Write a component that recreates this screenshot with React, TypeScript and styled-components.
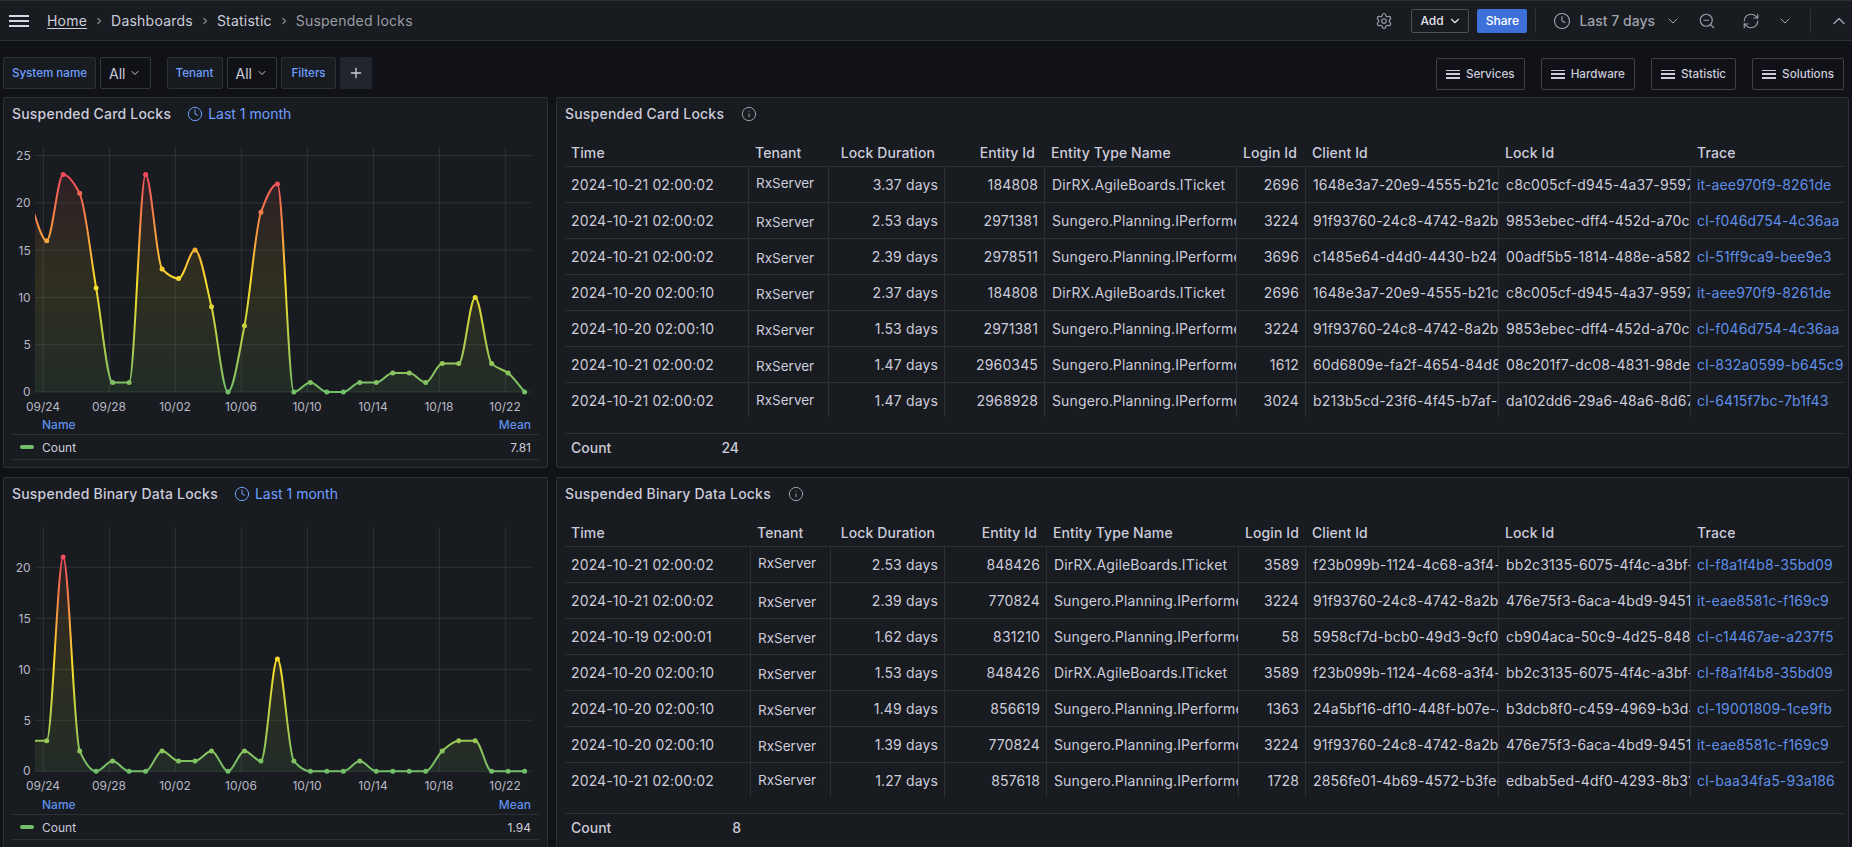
import React from 'react';
import styled, { createGlobalStyle } from 'styled-components';
import {
  ChevronDown,
  ChevronUp,
  Clock,
  Info,
  Plus,
  RefreshCw,
  Settings,
  ZoomOut,
} from 'lucide-react';

const GlobalStyle = createGlobalStyle`
  html, body {
    margin: 0;
    height: 847px;
    overflow: hidden;
    background: #111217;
    color: #ccccdc;
    font-family: Inter, "Noto Sans", "Liberation Sans", sans-serif;
    font-size: 14px;
  }
  * { box-sizing: border-box; }
`;

const TopBar = styled.header`
  display: flex;
  align-items: center;
  height: 41px;
  padding: 0 3px 0 9px;
  background: #181b1f;
  border-top: 1px solid #2a2d33;
  border-bottom: 1px solid #2c2f35;
`;

const Burger = styled.div`
  display: flex;
  flex-direction: column;
  justify-content: space-between;
  width: 20px;
  height: 12px;
  margin-right: 18px;

  span {
    display: block;
    height: 2px;
    background: #d8d8e4;
  }
`;

const Crumb = styled.span<{ $current?: boolean; $home?: boolean }>`
  color: ${(p) => (p.$current ? '#9a9ba6' : '#ccccdc')};
  text-decoration: ${(p) => (p.$home ? 'underline' : 'none')};
  text-underline-offset: 2px;
  letter-spacing: 0.22px;
  white-space: nowrap;
`;

const CrumbSep = styled.span`
  display: flex;
  justify-content: center;
  width: 24px;
  color: #85868f;
`;

const ToolGroup = styled.div`
  display: flex;
  align-items: center;
  margin-left: auto;
  color: #9fa0ad;
`;

const Slot = styled.span<{ $ml?: number }>`
  display: flex;
  align-items: center;
  margin-left: ${(p) => p.$ml ?? 0}px;
`;

const AddButton = styled.div`
  display: flex;
  align-items: center;
  gap: 4px;
  height: 24px;
  width: 58px;
  margin-left: 18px;
  padding-left: 8px;
  border: 1px solid rgba(204, 204, 220, 0.3);
  border-radius: 2px;
  color: #e4e4ee;
  font-size: 12px;
  font-weight: 500;
`;

const ShareButton = styled.div`
  display: flex;
  align-items: center;
  justify-content: center;
  height: 24px;
  width: 50px;
  margin-left: 8px;
  background: #3d71d9;
  border-radius: 2px;
  color: #fff;
  font-size: 12px;
  font-weight: 500;
`;

const Divider = styled.span<{ $ml: number }>`
  width: 1px;
  height: 24px;
  margin-left: ${(p) => p.$ml}px;
  background: #2f3238;
`;

const RangeText = styled.span`
  margin-left: 8px;
  color: #9fa0ad;
  font-weight: 500;
  white-space: nowrap;
`;

const FilterRow = styled.div`
  display: flex;
  align-items: flex-start;
  justify-content: space-between;
  height: 40px;
  margin-top: 16px;
  padding: 0 8px 0 3px;
`;

const Variables = styled.div`
  display: flex;
  gap: 4px;
`;

const VarLabel = styled.div<{ $w: number }>`
  display: flex;
  align-items: center;
  justify-content: center;
  width: ${(p) => p.$w}px;
  height: 32px;
  background: #181b1f;
  border: 1px solid #2c2f35;
  border-radius: 2px;
  color: #6e9fff;
  font-size: 11.6px;
  font-weight: 500;
`;

const VarValue = styled.div<{ $gapAfter?: number }>`
  display: flex;
  align-items: center;
  gap: 4px;
  width: 50.5px;
  height: 32px;
  padding: 0 8px;
  margin-right: ${(p) => p.$gapAfter ?? 0}px;
  background: #111217;
  border: 1px solid #34373d;
  border-radius: 2px;
  color: #ccccdc;
`;

const AddFilter = styled.div`
  display: flex;
  align-items: center;
  justify-content: center;
  width: 32px;
  height: 32px;
  background: #22252b;
  border-radius: 2px;
  color: #ccccdc;
`;

const LinkRow = styled.div`
  display: flex;
  gap: 16px;
  padding-top: 1px;
`;

const LinkButton = styled.div`
  display: flex;
  align-items: center;
  gap: 6px;
  height: 32px;
  padding: 0 9px;
  border: 1px solid rgba(204, 204, 220, 0.25);
  border-radius: 2px;
  color: #ccccdc;
  font-size: 11.7px;
  font-weight: 500;
`;

const Bars = styled.span`
  display: flex;
  flex-direction: column;
  justify-content: space-between;
  width: 14px;
  height: 9px;

  i {
    display: block;
    height: 1.5px;
    background: #ccccdc;
  }
`;

const Dashboard = styled.main`
  display: grid;
  grid-template-columns: 545px 1293px;
  grid-auto-rows: 371px;
  gap: 9px 8px;
  padding: 0 3px;
`;

const Panel = styled.section`
  background: #181b1f;
  border: 1px solid #2c2f35;
  border-radius: 2px;
  overflow: hidden;
`;

const PanelHeader = styled.div`
  display: flex;
  align-items: center;
  height: 32px;
  padding: 0 0 1px 8px;
`;

const PanelTitle = styled.h2`
  margin: 0;
  color: #ccccdc;
  font-size: 14px;
  font-weight: 500;
  letter-spacing: 0.2px;
  white-space: nowrap;
`;

const TimeShift = styled.span`
  display: flex;
  align-items: center;
  gap: 5px;
  margin-left: 16px;
  color: #6e9fff;
`;

const InfoMark = styled.span`
  display: flex;
  margin-left: 17px;
  color: #9fa0ad;
`;

const ChartSvg = styled.svg`
  display: block;
  width: 543px;
  height: 285px;
`;

const AxisText = styled.text`
  fill: #b9b9c6;
  font-size: 12px;
  font-family: Inter, "Noto Sans", sans-serif;
`;

const Legend = styled.div`
  margin: 0 8px;
  font-size: 12px;
`;

const LegendHead = styled.div`
  display: flex;
  align-items: center;
  justify-content: space-between;
  height: 20px;
  padding: 0 8px 0 30px;
  border-bottom: 1px solid #2c2f35;
  color: #5f8fe8;
  font-weight: 500;
`;

const LegendRow = styled.div`
  display: flex;
  align-items: center;
  height: 25px;
  padding: 0 8px;
  border-bottom: 1px solid #2c2f35;
  color: #ccccdc;
`;

const Swatch = styled.span`
  width: 14px;
  height: 4px;
  margin-right: 8px;
  border-radius: 2px;
  background: #73bf69;
`;

const LegendValue = styled.span`
  margin-left: auto;
`;

const Table = styled.table`
  width: 1280px;
  margin-left: 8px;
  table-layout: fixed;
  border-collapse: separate;
  border-spacing: 0;
`;

const HeadCell = styled.th<{ $right?: boolean }>`
  height: 37px;
  padding: 8px 9px 0 7px;
  border-bottom: 1px solid #2c2f35;
  color: #ccccdc;
  font-size: 14px;
  font-weight: 500;
  letter-spacing: 0.1px;
  text-align: ${(p) => (p.$right ? 'right' : 'left')};
  white-space: nowrap;

  &:first-child {
    padding-left: 6px;
  }
`;

const Cell = styled.td<{ $right?: boolean; $link?: boolean; $last?: boolean }>`
  height: ${(p) => (p.$last ? 34 : 36)}px;
  padding: 0 6px 0 ${(p) => (p.$link ? 6 : 7)}px;
  border-left: 1px solid #2c2f35;
  border-bottom: ${(p) => (p.$last ? 'none' : '1px solid #2c2f35')};
  color: ${(p) => (p.$link ? '#5f8fe8' : '#ccccdc')};
  letter-spacing: 0.14px;
  text-align: ${(p) => (p.$right ? 'right' : 'left')};
  white-space: nowrap;
  overflow: hidden;

  &:first-child {
    border-left: none;
    padding-left: 6px;
  }
`;

const TenantText = styled.span<{ $lift: number }>`
  display: inline-block;
  position: relative;
  top: ${(p) => p.$lift}px;
  font-size: 13.5px;
  letter-spacing: 0;
`;

const TableFooter = styled.div`
  display: flex;
  align-items: center;
  width: 1280px;
  height: 27px;
  margin: 16px 0 0 8px;
  border-top: 1px solid #2c2f35;
  font-weight: 500;
`;

const FooterCount = styled.div<{ $w: number }>`
  display: flex;
  justify-content: space-between;
  width: ${(p) => p.$w}px;
  padding: 0 9px 0 6px;
`;

const COLORS = ['#73bf69', '#fade2a', '#f2495c'];
const X_LABELS = ['09/24', '09/28', '10/02', '10/06', '10/10', '10/14', '10/18', '10/22'];

// point x positions, panel inner coords
const ptX = (i: number) => 42.7 + 16.48 * i;

// monotone cubic through the points, same idea as uplot's spline
const monotonePath = (pts: number[][]) => {
  const n = pts.length;
  const dx: number[] = [];
  const m: number[] = [];
  for (let i = 0; i < n - 1; i++) {
    dx.push(pts[i + 1][0] - pts[i][0]);
    m.push((pts[i + 1][1] - pts[i][1]) / dx[i]);
  }
  const t: number[] = [m[0]];
  for (let i = 1; i < n - 1; i++) {
    if (m[i - 1] * m[i] <= 0) t.push(0);
    else {
      const w1 = 2 * dx[i] + dx[i - 1];
      const w2 = dx[i] + 2 * dx[i - 1];
      t.push((w1 + w2) / (w1 / m[i - 1] + w2 / m[i]));
    }
  }
  t.push(m[n - 2]);
  let d = `M${pts[0][0]},${pts[0][1]}`;
  for (let i = 0; i < n - 1; i++) {
    const c = dx[i] / 3;
    d += `C${pts[i][0] + c},${pts[i][1] + t[i] * c} ${pts[i + 1][0] - c},${pts[i + 1][1] - t[i + 1] * c} ${pts[i + 1][0]},${pts[i + 1][1]}`;
  }
  return d;
};

interface ChartProps {
  id: string;
  values: number[];
  before: number;
  ticks: number[];
  zeroY: number;
  unit: number;
  top: number;
}

const Chart = ({ id, values, before, ticks, zeroY, unit, top }: ChartProps) => {
  const y = (v: number) => zeroY - v * unit;
  const pts = values.map((v, i) => [ptX(i), y(v)]);
  const line = monotonePath([[ptX(-1), y(before)], ...pts]);
  const max = Math.max(...values);
  const left = 31;
  const right = 527.7;
  return (
    <ChartSvg viewBox="0 0 543 285">
      <defs>
        <linearGradient id={id} gradientUnits="userSpaceOnUse" x1="0" x2="0" y1={y(0)} y2={y(max)}>
          <stop offset="0" stopColor={COLORS[0]} />
          <stop offset="0.5" stopColor={COLORS[1]} />
          <stop offset="1" stopColor={COLORS[2]} />
        </linearGradient>
        <clipPath id={`${id}-clip`}>
          <rect x={left} y={0} width={right - left + 3} height={zeroY + 4} />
        </clipPath>
      </defs>
      {ticks.map((t) => (
        <g key={t}>
          <line x1={left} x2={right} y1={y(t)} y2={y(t)} stroke="rgba(204,204,220,0.12)" />
          <AxisText x={26.7} y={y(t) - (t === 0 ? 1 : 0)} textAnchor="end" dominantBaseline="central">
            {t}
          </AxisText>
        </g>
      ))}
      {X_LABELS.map((l, i) => (
        <g key={l}>
          <line
            x1={39.3 + 66 * i}
            x2={39.3 + 66 * i}
            y1={top}
            y2={zeroY}
            stroke="rgba(204,204,220,0.12)"
          />
          <AxisText x={39 + 66 * i} y={zeroY + 14} textAnchor="middle" dominantBaseline="central">
            {l}
          </AxisText>
        </g>
      ))}
      <g clipPath={`url(#${id}-clip)`}>
        <path
          d={`${line}L${ptX(values.length - 1)},${y(0)}L${ptX(-1)},${y(0)}Z`}
          fill={`url(#${id})`}
          fillOpacity={0.1}
        />
        <path d={line} fill="none" stroke={`url(#${id})`} strokeWidth={2} />
        {pts.map(([px, py]) => (
          <circle key={px} cx={px} cy={py} r={2.5} fill={`url(#${id})`} />
        ))}
      </g>
    </ChartSvg>
  );
};

const DIRRX = 'DirRX.AgileBoards.ITicket';
const SUNGERO = 'Sungero.Planning.IPerformer';

type Row = [string, string, string, string, string, string, string, string];

const CARD_ROWS: Row[] = [
  ['2024-10-21 02:00:02', '3.37 days', '184808', DIRRX, '2696', '1648e3a7-20e9-4555-b21c', 'c8c005cf-d945-4a37-9597', 'it-aee970f9-8261de'],
  ['2024-10-21 02:00:02', '2.53 days', '2971381', SUNGERO, '3224', '91f93760-24c8-4742-8a2b', '9853ebec-dff4-452d-a70c-', 'cl-f046d754-4c36aa'],
  ['2024-10-21 02:00:02', '2.39 days', '2978511', SUNGERO, '3696', 'c1485e64-d4d0-4430-b241', '00adf5b5-1814-488e-a582', 'cl-51ff9ca9-bee9e3'],
  ['2024-10-20 02:00:10', '2.37 days', '184808', DIRRX, '2696', '1648e3a7-20e9-4555-b21c', 'c8c005cf-d945-4a37-9597', 'it-aee970f9-8261de'],
  ['2024-10-20 02:00:10', '1.53 days', '2971381', SUNGERO, '3224', '91f93760-24c8-4742-8a2b', '9853ebec-dff4-452d-a70c-', 'cl-f046d754-4c36aa'],
  ['2024-10-21 02:00:02', '1.47 days', '2960345', SUNGERO, '1612', '60d6809e-fa2f-4654-84d8', '08c201f7-dc08-4831-98de', 'cl-832a0599-b645c9'],
  ['2024-10-21 02:00:02', '1.47 days', '2968928', SUNGERO, '3024', 'b213b5cd-23f6-4f45-b7af-0', 'da102dd6-29a6-48a6-8d67', 'cl-6415f7bc-7b1f43'],
];

const BINARY_ROWS: Row[] = [
  ['2024-10-21 02:00:02', '2.53 days', '848426', DIRRX, '3589', 'f23b099b-1124-4c68-a3f4-', 'bb2c3135-6075-4f4c-a3bf-', 'cl-f8a1f4b8-35bd09'],
  ['2024-10-21 02:00:02', '2.39 days', '770824', SUNGERO, '3224', '91f93760-24c8-4742-8a2b', '476e75f3-6aca-4bd9-9451', 'it-eae8581c-f169c9'],
  ['2024-10-19 02:00:01', '1.62 days', '831210', SUNGERO, '58', '5958cf7d-bcb0-49d3-9cf0', 'cb904aca-50c9-4d25-848', 'cl-c14467ae-a237f5'],
  ['2024-10-20 02:00:10', '1.53 days', '848426', DIRRX, '3589', 'f23b099b-1124-4c68-a3f4-', 'bb2c3135-6075-4f4c-a3bf-', 'cl-f8a1f4b8-35bd09'],
  ['2024-10-20 02:00:10', '1.49 days', '856619', SUNGERO, '1363', '24a5bf16-df10-448f-b07e-4', 'b3dcb8f0-c459-4969-b3d4', 'cl-19001809-1ce9fb'],
  ['2024-10-20 02:00:10', '1.39 days', '770824', SUNGERO, '3224', '91f93760-24c8-4742-8a2b', '476e75f3-6aca-4bd9-9451', 'it-eae8581c-f169c9'],
  ['2024-10-21 02:00:02', '1.27 days', '857618', SUNGERO, '1728', '2856fe01-4b69-4572-b3fe-', 'edbab5ed-4df0-4293-8b31', 'cl-baa34fa5-93a186'],
];

const HEADERS: [string, boolean][] = [
  ['Time', false],
  ['Tenant', false],
  ['Lock Duration', true],
  ['Entity Id', true],
  ['Entity Type Name', false],
  ['Login Id', true],
  ['Client Id', false],
  ['Lock Id', false],
  ['Trace', false],
];

const Col = styled.col<{ $w: number }>`
  width: ${(p) => p.$w}px;
`;

const LocksTable = ({ title, rows, widths, count }: { title: string; rows: Row[]; widths: number[]; count: number }) => (
  <Panel>
    <PanelHeader>
      <PanelTitle>{title}</PanelTitle>
      <InfoMark>
        <Info size={16} strokeWidth={1.5} />
      </InfoMark>
    </PanelHeader>
    <Table>
      <colgroup>
        {widths.map((w, i) => (
          <Col key={i} $w={w} />
        ))}
      </colgroup>
      <thead>
        <tr>
          {HEADERS.map(([h, right]) => (
            <HeadCell key={h} $right={right}>
              {h}
            </HeadCell>
          ))}
        </tr>
      </thead>
      <tbody>
        {rows.map((r, i) => {
          const last = i === rows.length - 1;
          const lift = i === 0 ? -2 : last ? -1 : 1;
          return (
            <tr key={i}>
              <Cell $last={last}>{r[0]}</Cell>
              <Cell $last={last}>
                <TenantText $lift={lift}>RxServer</TenantText>
              </Cell>
              <Cell $last={last} $right>{r[1]}</Cell>
              <Cell $last={last} $right>{r[2]}</Cell>
              <Cell $last={last}>{r[3]}</Cell>
              <Cell $last={last} $right>{r[4]}</Cell>
              <Cell $last={last}>{r[5]}</Cell>
              <Cell $last={last}>{r[6]}</Cell>
              <Cell $last={last} $link>{r[7]}</Cell>
            </tr>
          );
        })}
      </tbody>
    </Table>
    <TableFooter>
      <FooterCount $w={widths[0]}>
        <span>Count</span>
        <span>{count}</span>
      </FooterCount>
    </TableFooter>
  </Panel>
);

const ChartPanel = ({ title, mean, chart }: { title: string; mean: string; chart: ChartProps }) => (
  <Panel>
    <PanelHeader>
      <PanelTitle>{title}</PanelTitle>
      <TimeShift>
        <Clock size={16} strokeWidth={1.5} />
        Last 1 month
      </TimeShift>
    </PanelHeader>
    <Chart {...chart} />
    <Legend>
      <LegendHead>
        <span>Name</span>
        <span>Mean</span>
      </LegendHead>
      <LegendRow>
        <Swatch />
        Count
        <LegendValue>{mean}</LegendValue>
      </LegendRow>
    </Legend>
  </Panel>
);

const LINKS = ['Services', 'Hardware', 'Statistic', 'Solutions'];

const CrumbArrow = () => (
  <CrumbSep>
    <svg width="6" height="10" viewBox="0 0 6 10" fill="none" stroke="currentColor" strokeWidth="1.2">
      <path d="M1.5 2l3 3-3 3" />
    </svg>
  </CrumbSep>
);

const App = () => (
  <>
    <GlobalStyle />
    <TopBar>
      <Burger>
        <span />
        <span />
        <span />
      </Burger>
      <Crumb $home>Home</Crumb>
      <CrumbArrow />
      <Crumb>Dashboards</Crumb>
      <CrumbArrow />
      <Crumb>Statistic</Crumb>
      <CrumbArrow />
      <Crumb $current>Suspended locks</Crumb>
      <ToolGroup>
        <Settings size={18} strokeWidth={1.5} />
        <AddButton>
          Add
          <ChevronDown size={14} />
        </AddButton>
        <ShareButton>Share</ShareButton>
        <Divider $ml={8} />
        <Slot $ml={17}>
          <Clock size={18} strokeWidth={1.5} />
        </Slot>
        <RangeText>Last 7 days</RangeText>
        <Slot $ml={10}>
          <ChevronDown size={16} strokeWidth={1.5} />
        </Slot>
        <Slot $ml={17}>
          <ZoomOut size={18} strokeWidth={1.5} />
        </Slot>
        <Slot $ml={26}>
          <RefreshCw size={18} strokeWidth={1.5} />
        </Slot>
        <Slot $ml={17}>
          <ChevronDown size={16} strokeWidth={1.5} />
        </Slot>
        <Divider $ml={17} />
        <Slot $ml={18}>
          <ChevronUp size={20} strokeWidth={1.8} />
        </Slot>
      </ToolGroup>
    </TopBar>
    <FilterRow>
      <Variables>
        <VarLabel $w={93}>System name</VarLabel>
        <VarValue $gapAfter={12}>
          All
          <ChevronDown size={12} />
        </VarValue>
        <VarLabel $w={56}>Tenant</VarLabel>
        <VarValue>
          All
          <ChevronDown size={12} />
        </VarValue>
        <VarLabel $w={55}>Filters</VarLabel>
        <AddFilter>
          <Plus size={16} />
        </AddFilter>
      </Variables>
      <LinkRow>
        {LINKS.map((l) => (
          <LinkButton key={l}>
            <Bars>
              <i />
              <i />
              <i />
            </Bars>
            {l}
          </LinkButton>
        ))}
      </LinkRow>
    </FilterRow>
    <Dashboard>
      <ChartPanel
        title="Suspended Card Locks"
        mean="7.81"
        chart={{
          id: 'card',
          before: 20,
          values: [16, 23, 21, 11, 1, 1, 23, 13, 12, 15, 9, 0, 7, 19, 22, 0, 1, 0, 0, 1, 1, 2, 2, 1, 3, 3, 10, 3, 2, 0],
          ticks: [0, 5, 10, 15, 20, 25],
          zeroY: 262,
          unit: 9.46,
          top: 17,
        }}
      />
      <LocksTable
        title="Suspended Card Locks"
        rows={CARD_ROWS}
        widths={[183, 80, 116, 100, 192, 69, 193, 192, 155]}
        count={24}
      />
      <ChartPanel
        title="Suspended Binary Data Locks"
        mean="1.94"
        chart={{
          id: 'binary',
          before: 3,
          values: [3, 21, 2, 0, 1, 0, 0, 2, 1, 1, 2, 0, 2, 1, 11, 1, 0, 0, 0, 1, 0, 0, 0, 0, 2, 3, 3, 0, 0, 0],
          ticks: [0, 5, 10, 15, 20],
          zeroY: 261.3,
          unit: 10.2,
          top: 16.7,
        }}
      />
      <LocksTable
        title="Suspended Binary Data Locks"
        rows={BINARY_ROWS}
        widths={[185, 80, 114, 102, 192, 67, 193, 192, 155]}
        count={8}
      />
    </Dashboard>
  </>
);

export default App;
